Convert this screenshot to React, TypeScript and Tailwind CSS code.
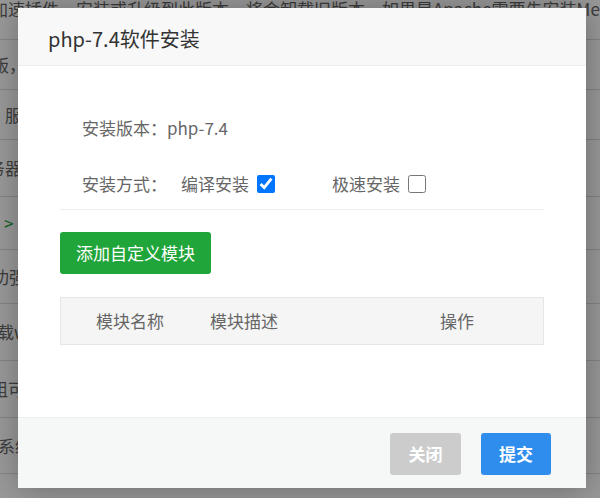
import React from "react";

const font = { fontFamily: '"Noto Sans CJK SC", "Noto Sans", sans-serif' };

export default function App() {
  return (
    <div
      className="relative h-[498px] w-[600px] overflow-hidden bg-white text-[17px] text-[#666]"
      style={font}
    >
      {/* background page rows */}
      <div className="flex flex-col">
        <div className="flex h-[40px] items-start border-b border-[#ddd] whitespace-nowrap leading-[18px]">
          <span className="ml-[-9px]">加速插件，安装或升级到此版本，将会卸载旧版本，如果是Apache需要先安装Memcached</span>
        </div>
        <div className="flex h-[50px] items-center border-b border-[#ddd] whitespace-nowrap">
          <span className="ml-[-8px]">版，</span>
        </div>
        <div className="flex h-[50px] items-center border-b border-[#ddd] whitespace-nowrap">
          <span className="ml-[5px]">服</span>
        </div>
        <div className="flex h-[57px] items-center border-b border-[#ddd] whitespace-nowrap">
          <span className="ml-[-12px]">务器</span>
        </div>
        <div className="flex h-[53px] items-center border-b border-[#ddd] whitespace-nowrap">
          <span className="ml-[4px] text-[#20a53a]">&gt; 2</span>
        </div>
        <div className="flex h-[54px] items-center border-b border-[#ddd] whitespace-nowrap">
          <span className="ml-[-8px]">功强</span>
        </div>
        <div className="flex h-[57px] items-center border-b border-[#ddd] whitespace-nowrap">
          <span className="ml-[-3px]">载w</span>
        </div>
        <div className="flex h-[57px] items-center border-b border-[#ddd] whitespace-nowrap">
          <span className="ml-[-9px]">组可</span>
        </div>
        <div className="flex h-[56px] items-center border-b border-[#ddd] whitespace-nowrap">
          <span className="ml-[-2px]">系统</span>
        </div>
        <div className="flex h-[57px] items-center border-b border-[#ddd]" />
      </div>

      {/* overlay */}
      <div className="absolute inset-0 bg-black/40" />

      {/* dialog */}
      <div className="absolute left-[18px] top-[8px] flex h-[480px] w-[568px] flex-col bg-white shadow-[1px_1px_30px_rgba(0,0,0,0.3)]">
        <div className="flex h-[58px] shrink-0 items-center border-b border-[#eee] bg-[#f8f8f8] pl-[30px] pt-[4px] text-[20px] text-[#333]">
          php-7.4软件安装
        </div>

        <div className="flex flex-1 flex-col px-[42px] pt-[39px]">
          <div className="flex h-[50px] items-center pl-[22px] pb-[4px]">安装版本：php-7.4</div>
          <div className="flex h-[54px] items-center pl-[22px] pt-[4px]">
            <span>安装方式：</span>
            <label className="ml-[14px] flex items-center gap-[8px]">
              <span>编译安装</span>
              <input type="checkbox" defaultChecked className="m-0 h-[18px] w-[18px]" />
            </label>
            <label className="ml-[57px] flex items-center gap-[8px]">
              <span>极速安装</span>
              <input type="checkbox" className="m-0 h-[18px] w-[18px]" />
            </label>
          </div>
          <div className="h-px bg-[#eee]" />
          <div className="pt-[22px]">
            <button className="h-[42px] w-[151px] rounded-[3px] bg-[#20a53a] text-[17px] text-white">
              添加自定义模块
            </button>
          </div>
          <div className="mt-[23px] grid h-[48px] grid-cols-[149px_232px_1fr] items-center border border-[#e6e6e6] bg-[#f5f5f5]">
            <span className="pl-[35px]">模块名称</span>
            <span>模块描述</span>
            <span className="-ml-[2px]">操作</span>
          </div>
        </div>

        <div className="flex h-[71px] shrink-0 items-center justify-end gap-[20px] border-t border-[#eef0f0] bg-[#f6f7f7] pr-[35px] pt-[2px]">
          <button className="h-[42px] w-[71px] rounded-[3px] bg-[#cccccc] text-[17px] font-bold text-white">关闭</button>
          <button className="h-[42px] w-[70px] rounded-[3px] bg-[#2e8ded] text-[17px] font-bold text-white">提交</button>
        </div>
      </div>
    </div>
  );
}
